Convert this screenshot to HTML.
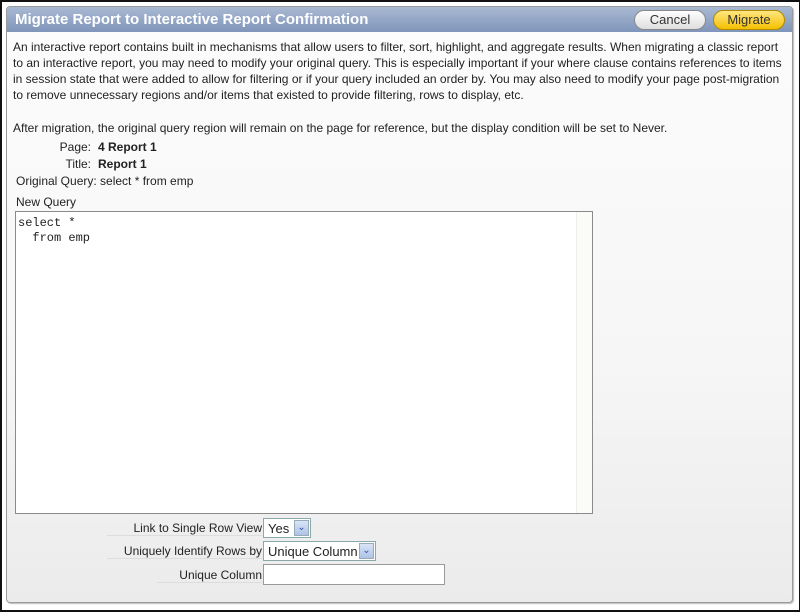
<!DOCTYPE html>
<html><head><style>
*{box-sizing:border-box}
body{margin:0;width:800px;height:612px;background:#fff;border:2px solid #111;border-right-width:1px;font-family:"Liberation Sans",Arial,sans-serif;font-size:12px;color:#222;position:relative;overflow:hidden}
.panel{position:absolute;left:4px;top:4px;width:787px;height:597px;border:1px solid #9a9a9a;border-radius:4px;background:linear-gradient(#fcfcfc,#f6f6f6 60%,#ebebeb);box-shadow:1px 1px 1px #bbb}
.hdr{height:25px;background:linear-gradient(#a9b9d3,#7f95ba);border-radius:3px 3px 0 0;color:#fff;font-weight:bold;font-size:15px;padding:4px 0 0 8px}
.btn{position:absolute;top:3px;height:20px;border-radius:10px;font-size:13px;text-align:center;line-height:18px}
.cancel{left:627px;width:72px;border:1px solid #888;background:linear-gradient(#fff,#ddd);color:#333}
.mig{left:706px;width:72px;border:1px solid #b08a00;background:linear-gradient(#ffe680,#f5c000);color:#333}
p{margin:0;position:absolute;left:6px;width:772px;line-height:16px}
.lbl{position:absolute;text-align:right;width:140px;left:0}
.ta{position:absolute;left:8px;top:204px;width:578px;height:303px;border:1px solid #8a8a8a;background:#fff;font-family:"Liberation Mono",monospace;font-size:12px;padding:4px 2px;line-height:15px;white-space:pre}
.sb{position:absolute;right:0;top:0;width:16px;height:100%;background:#fbfbf7;border-left:1px solid #eee}
.fl{position:absolute;text-align:right;border-bottom:1px solid #ddd}
.sel{position:absolute;height:20px;border:1px solid #8aa;background:#fff;padding:2px 4px;font-size:13px}
.dd{position:absolute;right:1px;top:1px;width:15px;height:16px;background:linear-gradient(#d9e4f7,#aec3e6);border:1px solid #9ab;color:#35a;font-size:10px;text-align:center;line-height:14px}
</style></head><body>
<div class="panel">
<div class="hdr">Migrate Report to Interactive Report Confirmation</div>
<div class="btn cancel">Cancel</div><div class="btn mig">Migrate</div>
<p style="top:32px">An interactive report contains built in mechanisms that allow users to filter, sort, highlight, and aggregate results. When migrating a classic report to an interactive report, you may need to modify your original query. This is especially important if your where clause contains references to items in session state that were added to allow for filtering or if your query included an order by. You may also need to modify your page post-migration to remove unnecessary regions and/or items that existed to provide filtering, rows to display, etc.</p>
<p style="top:113px">After migration, the original query region will remain on the page for reference, but the display condition will be set to Never.</p>
<div class="lbl" style="top:133px;width:84px">Page:</div><div style="position:absolute;left:91px;top:133px;font-weight:bold">4 Report 1</div>
<div class="lbl" style="top:150px;width:84px">Title:</div><div style="position:absolute;left:91px;top:150px;font-weight:bold">Report 1</div>
<div style="position:absolute;left:9px;top:167px">Original Query: select * from emp</div>
<div style="position:absolute;left:9px;top:188px">New Query</div>
<div class="ta">select *
  from emp<div class="sb"></div></div>
<div class="fl" style="left:100px;width:155px;top:514px">Link to Single Row View</div>
<div class="sel" style="left:256px;top:511px;width:48px">Yes<div class="dd">&#8964;</div></div>
<div class="fl" style="left:100px;width:155px;top:537px">Uniquely Identify Rows by</div>
<div class="sel" style="left:256px;top:534px;width:113px">Unique Column<div class="dd">&#8964;</div></div>
<div class="fl" style="left:150px;width:105px;top:561px">Unique Column</div>
<div style="position:absolute;left:256px;top:557px;width:182px;height:21px;border:1px solid #999;background:#fff"></div>
</div>
</body></html>
